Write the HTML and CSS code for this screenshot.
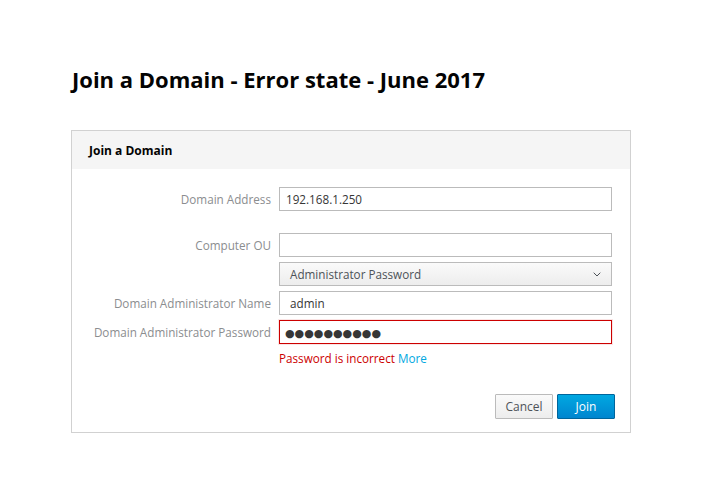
FILE: index.html
```html
<!DOCTYPE html>
<html>
<head>
<meta charset="utf-8">
<link rel="stylesheet" href="styles.css">
</head>
<body>
<div class="page">
  <h1 class="title">Join a Domain - Error state - June 2017</h1>
  <div class="card">
    <div class="card-head">Join a Domain</div>
    <div class="card-body">
      <div class="row">
        <div class="label">Domain Address</div>
        <div class="field input pad-s">192.168.1.250</div>
      </div>
      <div class="row gap-big">
        <div class="label">Computer OU</div>
        <div class="field input"></div>
      </div>
      <div class="row">
        <div class="label"></div>
        <div class="field select">
          <span>Administrator Password</span>
          <svg class="chev" width="8" height="5" viewBox="0 0 8 5"><path d="M0.7 0.7 L4 4 L7.3 0.7" fill="none" stroke="#4d5258" stroke-width="1"/></svg>
        </div>
      </div>
      <div class="row">
        <div class="label">Domain Administrator Name</div>
        <div class="field input">admin</div>
      </div>
      <div class="row pw-row">
        <div class="label">Domain Administrator Password</div>
        <div class="field input error pad-s"><span class="dots">●●●●●●●●●●</span></div>
      </div>
      <div class="row msg-row">
        <div class="label"></div>
        <div class="msg"><span class="err">Password is incorrect</span> <a class="more">More</a></div>
      </div>
      <div class="actions">
        <button class="btn btn-default">Cancel</button>
        <button class="btn btn-primary">Join</button>
      </div>
    </div>
  </div>
</div>
</body>
</html>
```
FILE: styles.css
```css
html, body {
  margin: 0;
  padding: 0;
  background: #fff;
  font-family: "Open Sans", "Liberation Sans", sans-serif;
  color: #363636;
}
.page {
  padding: 61px 0 0 71px;
  width: 560px;
}
.title {
  margin: 0 0 0 1px;
  font-size: 22px;
  font-weight: 700;
  color: #030303;
  line-height: 36px;
}
.card {
  margin-top: 33px;
  border: 1px solid #d1d1d1;
  background: #fff;
}
.card-head {
  background: #f5f5f5;
  height: 38px;
  line-height: 40px;
  padding-left: 17px;
  font-size: 12px;
  font-weight: 700;
  color: #030303;
}
.card-body {
  padding: 18px 15px 13px 0;
}
.row {
  display: flex;
  align-items: center;
  margin-bottom: 5px;
}
.row.gap-big {
  margin-top: 22px;
}
.row.pw-row {
  margin-top: 1px;
}
.label {
  width: 199px;
  text-align: right;
  padding-right: 8px;
  font-size: 11.7px;
  color: #8b8d8f;
  flex: none;
}
.field {
  box-sizing: border-box;
  width: 333px;
  height: 24px;
  border: 1px solid #bbbbbb;
  font-size: 11.7px;
  line-height: 22px;
  padding: 0 10px;
  color: #363636;
}
.field.pad-s {
  padding-left: 6px;
}
.select {
  display: flex;
  justify-content: space-between;
  align-items: center;
  background: linear-gradient(#fafafa, #ededed);
  border-color: #bbbbbb;
  padding-right: 10px;
  color: #4d5258;
}
.chev { display: block; }
.error {
  border-color: #cc0000;
  box-shadow: 0 0 0 1px rgba(204, 0, 0, 0.1);
}
.error.pad-s {
  padding-left: 5px;
}
.dots {
  font-family: "DejaVu Sans", sans-serif;
  font-size: 11px;
  letter-spacing: 0;
  color: #363636;
}
.msg-row { margin-top: 5px; }
.msg {
  font-size: 11.7px;
  line-height: 18px;
}
.err { color: #cc0000; }
.more { color: #00a8e1; }
.actions {
  display: flex;
  justify-content: flex-end;
  gap: 4px;
  margin-top: 27px;
}
.btn {
  box-sizing: border-box;
  height: 25px;
  width: 58px;
  font-family: "Open Sans", "Liberation Sans", sans-serif;
  font-size: 12px;
  padding: 0;
  border-radius: 1px;
}
.btn-default {
  border: 1px solid #bbbbbb;
  background: linear-gradient(#fafafa, #ededed);
  color: #4d5258;
}
.btn-primary {
  border: 1px solid #00659c;
  background: linear-gradient(#00a8e1, #0085cf);
  color: #ffffff;
}
```
